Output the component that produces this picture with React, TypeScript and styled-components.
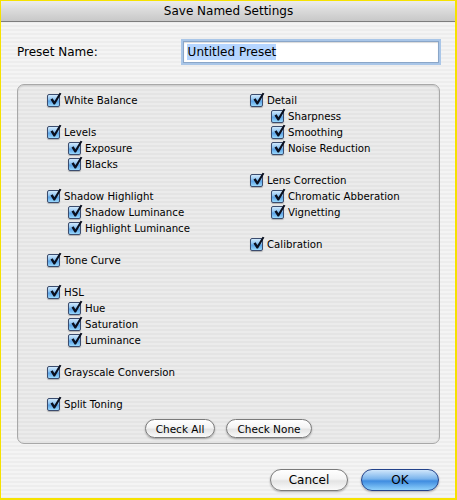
import React from "react";
import styled, { createGlobalStyle } from "styled-components";

const GlobalStyle = createGlobalStyle`
  html, body {
    margin: 0;
    padding: 0;
    background: #ffffff;
  }
  * {
    box-sizing: border-box;
  }
`;

const Frame = styled.div`
  width: 457px;
  height: 500px;
  border-style: solid;
  border-color: #f6e200;
  border-width: 1px 2px 2px 1px;
  display: flex;
  flex-direction: column;
  font-family: "DejaVu Sans", "Liberation Sans", sans-serif;
  color: #000;
  background: repeating-linear-gradient(
    to bottom,
    #ededed 0px,
    #ededed 2px,
    #f4f4f4 2px,
    #f4f4f4 4px
  );
`;

const TitleBar = styled.div`
  height: 21px;
  flex: none;
  display: flex;
  align-items: center;
  justify-content: center;
  font-size: 12px;
  background: linear-gradient(to bottom, #ececec 0%, #d9d9d9 50%, #c8c8c8 100%);
  border-bottom: 1px solid #7d7d7d;
  padding-left: 1px;
`;

const Body = styled.div`
  flex: 1;
  display: flex;
  flex-direction: column;
  padding: 0 16px 0 16px;
`;

const PresetRow = styled.div`
  display: flex;
  align-items: center;
  margin-top: 19px;
  height: 22px;
`;

const PresetLabel = styled.label`
  font-size: 12px;
  width: 166px;
`;

const NameField = styled.div`
  width: 257px;
  height: 22px;
  background: #fff;
  border: 1px solid #8aa6c8;
  box-shadow: 0 0 0 2px #a9c6e8, inset 0 1px 1px rgba(0, 0, 0, 0.15);
  display: flex;
  align-items: center;
  padding-left: 3px;
  font-size: 12px;
`;

const Selected = styled.span`
  background: #b5d5ff;
  padding: 1px 0 1px 1px;
`;

const GroupBox = styled.div`
  margin-top: 21px;
  width: 423px;
  height: 360px;
  border: 1px solid #a8a8a8;
  border-radius: 7px;
  background: rgba(0, 0, 0, 0.035);
  box-shadow: inset 0 1px 2px rgba(0, 0, 0, 0.12);
  display: flex;
  flex-direction: column;
  padding: 7px 0 0 29px;
`;

const Columns = styled.div`
  display: flex;
`;

const Column = styled.div<{ $width?: number }>`
  width: ${(p) => (p.$width ? `${p.$width}px` : "auto")};
  display: flex;
  flex-direction: column;
`;

const Group = styled.div`
  display: flex;
  flex-direction: column;
  margin-bottom: 16px;
`;

const Row = styled.div<{ $nested?: boolean }>`
  display: flex;
  align-items: center;
  height: 16px;
  margin-left: ${(p) => (p.$nested ? "21px" : "0")};
  font-size: 10.2px;
  gap: 4px;
`;

const Box = styled.span`
  position: relative;
  width: 13px;
  height: 13px;
  flex: none;
  border: 1px solid #3b4c6e;
  border-radius: 2px;
  background: linear-gradient(
    to bottom,
    #d2e9fc 0%,
    #86bff0 45%,
    #5aa2e6 55%,
    #9ad8fc 100%
  );
  box-shadow: 0 1px 1px rgba(0, 0, 0, 0.25);
`;

const Tick = styled.svg`
  position: absolute;
  left: 1px;
  top: -3px;
  width: 13px;
  height: 14px;
`;

const CenterButtons = styled.div`
  display: flex;
  justify-content: center;
  gap: 11px;
  margin-top: -9px;
  padding-right: 29px;
`;

const Pill = styled.button<{ $primary?: boolean; $w: number; $h: number }>`
  width: ${(p) => p.$w}px;
  height: ${(p) => p.$h}px;
  border-radius: ${(p) => p.$h / 2}px;
  font-family: "DejaVu Sans", "Liberation Sans", sans-serif;
  font-size: ${(p) => (p.$h > 20 ? "12px" : "10.5px")};
  color: #000;
  padding: 0;
  border: 1px solid ${(p) => (p.$primary ? "#23428a" : "#7a7a7a")};
  background: ${(p) =>
    p.$primary
      ? "linear-gradient(to bottom, #cfe6fb 0%, #79b3ec 45%, #3f8ce0 55%, #8fd1fb 100%)"
      : "linear-gradient(to bottom, #ffffff 0%, #f4f4f4 45%, #e4e4e4 55%, #fafafa 100%)"};
  box-shadow: 0 1px 2px rgba(0, 0, 0, 0.3);
`;

const Footer = styled.div`
  display: flex;
  justify-content: flex-end;
  gap: 13px;
  margin-top: 25px;
`;

type Item = { label: string; children?: string[] };

const leftGroups: Item[] = [
  { label: "White Balance" },
  { label: "Levels", children: ["Exposure", "Blacks"] },
  { label: "Shadow Highlight", children: ["Shadow Luminance", "Highlight Luminance"] },
  { label: "Tone Curve" },
  { label: "HSL", children: ["Hue", "Saturation", "Luminance"] },
  { label: "Grayscale Conversion" },
  { label: "Split Toning" },
];

const rightGroups: Item[] = [
  { label: "Detail", children: ["Sharpness", "Smoothing", "Noise Reduction"] },
  { label: "Lens Correction", children: ["Chromatic Abberation", "Vignetting"] },
  { label: "Calibration" },
];

const Check: React.FC<{ label: string; nested?: boolean }> = ({ label, nested }) => (
  <Row $nested={nested}>
    <Box>
      <Tick viewBox="0 0 13 14">
        <path
          d="M1.5 7.5 L3.6 6.2 L5.4 9.2 L10.6 0.8 L12.4 1.6 L6 12.4 L4.6 12.4 Z"
          fill="#0a0f1e"
        />
      </Tick>
    </Box>
    <span>{label}</span>
  </Row>
);

const renderGroups = (groups: Item[]) =>
  groups.map((g) => (
    <Group key={g.label}>
      <Check label={g.label} />
      {g.children?.map((c) => (
        <Check key={c} label={c} nested />
      ))}
    </Group>
  ));

export default function App() {
  return (
    <>
      <GlobalStyle />
      <Frame>
        <TitleBar>Save Named Settings</TitleBar>
        <Body>
          <PresetRow>
            <PresetLabel>Preset Name:</PresetLabel>
            <NameField>
              <Selected>Untitled Preset</Selected>
            </NameField>
          </PresetRow>
          <GroupBox>
            <Columns>
              <Column $width={203}>{renderGroups(leftGroups)}</Column>
              <Column>{renderGroups(rightGroups)}</Column>
            </Columns>
            <CenterButtons>
              <Pill $w={70} $h={19}>Check All</Pill>
              <Pill $w={86} $h={19}>Check None</Pill>
            </CenterButtons>
          </GroupBox>
          <Footer>
            <Pill $w={78} $h={22}>Cancel</Pill>
            <Pill $w={78} $h={22} $primary>OK</Pill>
          </Footer>
        </Body>
      </Frame>
    </>
  );
}
